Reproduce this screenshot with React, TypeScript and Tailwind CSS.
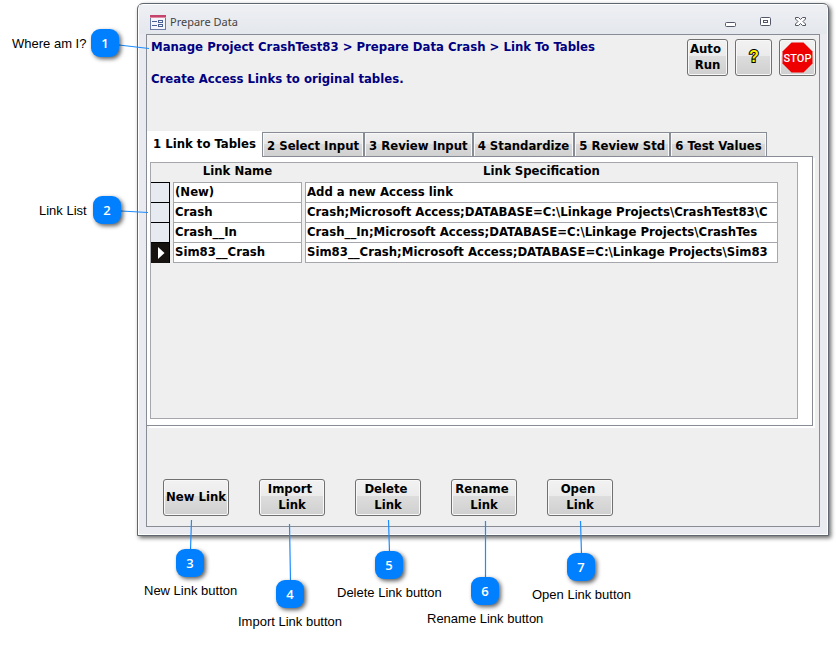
import React from "react";

const links = [
  { name: "(New)", spec: "Add a new Access link" },
  { name: "Crash", spec: "Crash;Microsoft Access;DATABASE=C:\\Linkage Projects\\CrashTest83\\C" },
  { name: "Crash__In", spec: "Crash__In;Microsoft Access;DATABASE=C:\\Linkage Projects\\CrashTes" },
  { name: "Sim83__Crash", spec: "Sim83__Crash;Microsoft Access;DATABASE=C:\\Linkage Projects\\Sim83" },
];

const tabs = ["2 Select Input", "3 Review Input", "4 Standardize", "5 Review Std", "6 Test Values"];

const actions = ["New Link", "Import \nLink", "Delete \nLink", "Rename \nLink", "Open \nLink"];

const callouts = [
  { n: 1, text: "Where am I?", box: "left-[91px] top-[29px]", label: "left-[12px] top-[36px]" },
  { n: 2, text: "Link List", box: "left-[93px] top-[196px]", label: "left-[39px] top-[203px]" },
  { n: 3, text: "New Link button", box: "left-[176px] top-[549px]", label: "left-[144px] top-[583px]" },
  { n: 4, text: "Import Link button", box: "left-[276px] top-[580px]", label: "left-[238px] top-[614px]" },
  { n: 5, text: "Delete Link button", box: "left-[375px] top-[551px]", label: "left-[337px] top-[585px]" },
  { n: 6, text: "Rename Link button", box: "left-[471px] top-[577px]", label: "left-[427px] top-[611px]" },
  { n: 7, text: "Open Link button", box: "left-[567px] top-[553px]", label: "left-[532px] top-[587px]" },
];

function PushButton({ size, label, children }: { size: string; label?: string; children: React.ReactNode }) {
  return (
    <button
      type="button"
      aria-label={label}
      className={`flex h-[37px] items-center justify-center whitespace-pre rounded-[3px] border border-[#707070] bg-[linear-gradient(#f2f2f2,#ebebeb_46%,#dddddd_46%,#cfcfcf)] text-center leading-4 shadow-[inset_0_0_0_1px_#f8f8f8] ${size}`}
    >
      {children}
    </button>
  );
}

function FormIcon() {
  return (
    <svg width="16" height="15" viewBox="0 0 16 15" aria-hidden="true">
      <rect x="0.5" y="0.5" width="15" height="14" fill="#f4f6fb" stroke="#6b7ba6" />
      <rect x="0" y="0" width="16" height="3" fill="#c4446c" />
      <rect x="0" y="2" width="16" height="1" fill="#e08aa4" />
      <path d="M2 6.500h5M2 10.500h5" stroke="#4a5f94" />
      <rect x="8.500" y="5.500" width="4" height="2" fill="#fff" stroke="#4a5f94" />
      <rect x="8.500" y="9.500" width="4" height="2" fill="#fff" stroke="#4a5f94" />
    </svg>
  );
}

function TitleBar() {
  return (
    <header className="flex h-[29px] items-center bg-[linear-gradient(#eef0f4,#e4e7ec)] pl-[11px] pr-[21px] pt-[5px]">
      <FormIcon />
      <h1 className="ml-1 flex-1 font-['Noto_Sans'] text-[11px] leading-4 text-[#444]">Prepare Data</h1>
      <div className="flex gap-6">
        <button type="button" aria-label="Minimize">
          <svg width="11" height="11" viewBox="0 0 11 11">
            <rect x="0.5" y="5.500" width="10" height="4" rx="1" fill="#fff" stroke="#535666" />
          </svg>
        </button>
        <button type="button" aria-label="Maximize">
          <svg width="11" height="11" viewBox="0 0 11 11">
            <rect x="0.5" y="0.500" width="10" height="8" rx="1" fill="#fff" stroke="#535666" />
            <rect x="3.500" y="3.500" width="4" height="2" fill="#fff" stroke="#535666" />
          </svg>
        </button>
        <button type="button" aria-label="Close">
          <svg width="11" height="11" viewBox="0 0 11 11">
            <path
              d="M0.500 0.500h3l2 2 2-2h3v1.500l-2.500 2.500 2.500 2.500v1.500h-3l-2-2-2 2h-3v-1.500l2.500-2.500-2.500-2.500z"
              fill="#fff"
              stroke="#535666"
            />
          </svg>
        </button>
      </div>
    </header>
  );
}

function LinkTable() {
  return (
    <table className="w-[calc(100%-19px)] table-fixed border-separate border-spacing-0">
      <thead>
        <tr className="h-[19px] leading-4">
          <th className="w-[22px]" aria-label="Record selector" />
          <th className="w-[132px] p-0 pr-[3px] align-top">Link Name</th>
          <th className="p-0 align-top">Link Specification</th>
        </tr>
      </thead>
      <tbody>
        {links.map((link, i) => {
          const current = i === links.length - 1;
          const field = `border-x border-t border-[#a5a7ad] bg-white px-px leading-[18px] ${current ? "h-[21px] border-b" : "h-5"}`;
          return (
            <tr key={link.name} className="h-5 align-top">
              <td className="p-0 pr-[3px]">
                <div
                  className={`flex items-center justify-end border-r border-t border-black pr-1 ${
                    current ? "h-[21px] bg-[#15120f]" : "h-5 bg-[#e7eaf0]"
                  }`}
                >
                  {current && (
                    <svg width="7" height="12" viewBox="0 0 7 12" aria-label="Current record">
                      <path d="M0 0l6.500 6-6.500 6z" fill="#fff" />
                    </svg>
                  )}
                </div>
              </td>
              <td className="p-0 pr-[3px]">
                <div className={field}>{link.name}</div>
              </td>
              <td className="p-0">
                <div className={field}>
                  <div className="overflow-hidden whitespace-nowrap">{link.spec}</div>
                </div>
              </td>
            </tr>
          );
        })}
      </tbody>
    </table>
  );
}

function Callouts() {
  return (
    <>
      <svg className="pointer-events-none absolute left-0 top-0" width="838" height="645" aria-hidden="true">
        <path
          d="M119 45L149 48.500M121 211L148 212.500M191.500 520L190.500 550M289.500 524L290.500 581M388.500 520L389.500 552M485.500 521V578M580.500 521L581.500 554"
          stroke="#1c8cff"
          strokeWidth="1.2"
        />
      </svg>
      {callouts.map((c) => (
        <React.Fragment key={c.n}>
          <span
            className={`absolute flex size-7 items-center justify-center rounded-[9px] bg-[#0080ff] font-['Open_Sans'] text-[13px] font-semibold leading-4 text-white shadow-[2px_2px_4px_#000000a0] ${c.box}`}
          >
            {c.n}
          </span>
          <span className={`absolute whitespace-nowrap font-['Liberation_Sans'] text-[13px] leading-4 text-black ${c.label}`}>
            {c.text}
          </span>
        </React.Fragment>
      ))}
    </>
  );
}

export default function App() {
  return (
    <div className="relative min-h-screen bg-white pb-[108px] pl-[137px] pr-[9px] pt-[3px] font-['DejaVu_Sans_Condensed','DejaVu_Sans',sans-serif] text-[13px]">
      <section className="rounded-t-[6px] border border-[#5f666e] bg-[#e9ebf0] p-px shadow-[2px_2px_4px_#00000099,inset_0_0_0_1px_#fff]">
        <TitleBar />
        <main className="mx-[7px] mb-[7px] border border-[#888c94] bg-[#efefef]">
          <div className="flex items-start pl-1 pr-[3px] pt-1">
            <div className="flex-1 font-bold leading-4 text-[#000080]">
              <p>Manage Project CrashTest83 &gt; Prepare Data Crash &gt; Link To Tables</p>
              <p className="mt-4">Create Access Links to original tables.</p>
            </div>
            <div className="flex gap-[7px] font-bold text-black">
              <PushButton size="w-[41px] pb-0.5">{"Auto \nRun"}</PushButton>
              <PushButton size="w-[37px] pb-0.5" label="Help">
                <svg width="16" height="20" viewBox="0 0 16 20">
                  <text
                    x="8"
                    y="15"
                    textAnchor="middle"
                    className="fill-[#ffee00] stroke-black font-['Liberation_Sans'] text-[16px] font-bold [paint-order:stroke] [stroke-width:2px]"
                  >
                    ?
                  </text>
                </svg>
              </PushButton>
              <PushButton size="w-[37px]" label="Stop">
                <svg width="31" height="31" viewBox="0 0 31 31">
                  <path d="M9.500 0.500h12l9 9v12l-9 9h-12l-9-9v-12z" fill="#ee0000" />
                  <text x="15.5" y="20" textAnchor="middle" className="fill-white font-['Roboto'] text-[11px] font-medium">
                    STOP
                  </text>
                </svg>
              </PushButton>
            </div>
          </div>

          <div role="tablist" className="mt-11 flex items-end font-bold leading-4 text-black">
            <button type="button" role="tab" aria-selected="true" className="relative -mb-px h-[26px] bg-white px-[6px] pb-px">
              1 Link to Tables
            </button>
            {tabs.map((tab) => (
              <button
                key={tab}
                type="button"
                role="tab"
                aria-selected="false"
                className="h-6 border-x border-t border-[#888c94] bg-[linear-gradient(#f0f0f0,#e8e8e8_46%,#dadada_46%,#d0d0d0)] px-1 pt-[3px] shadow-[inset_1px_1px_0_#f8f8f8,inset_-1px_0_0_#f8f8f8]"
              >
                {tab}
              </button>
            ))}
          </div>

          <div role="tabpanel" className="mr-[6px] border-b border-r border-t border-[#888c94] bg-white pb-[6px] pl-[3px] pr-[14px] pt-[5px] shadow-[2px_2px_0_#fff]">
            <div className="h-[257px] border border-[#a5a7ad] bg-[#efefef] font-bold text-black">
              <LinkTable />
            </div>
          </div>

          <div className="flex gap-[30px] pb-[10px] pl-4 pt-[53px] font-bold text-black">
            {actions.map((a) => (
              <PushButton key={a} size="w-[66px] pb-0.5">
                {a}
              </PushButton>
            ))}
          </div>
        </main>
      </section>
      <Callouts />
    </div>
  );
}
